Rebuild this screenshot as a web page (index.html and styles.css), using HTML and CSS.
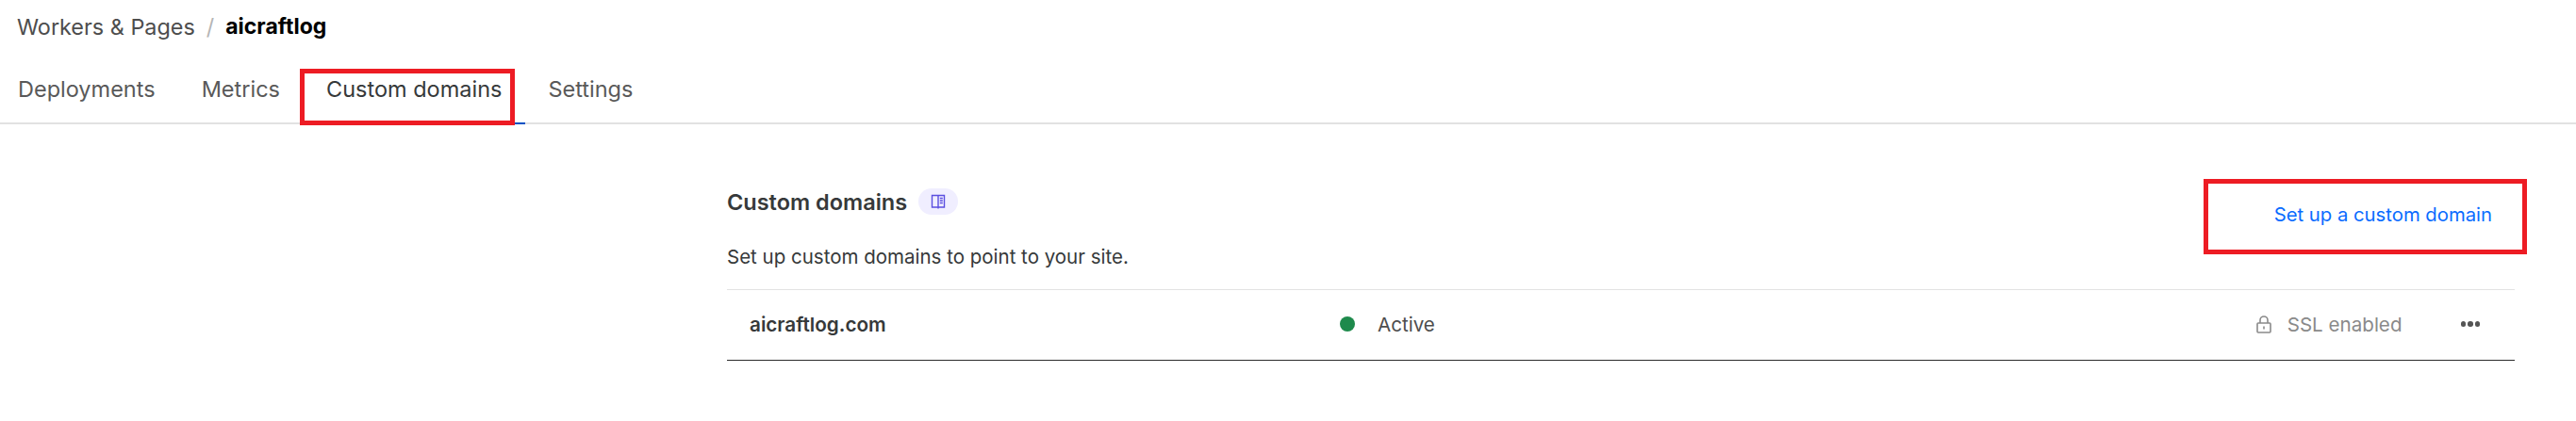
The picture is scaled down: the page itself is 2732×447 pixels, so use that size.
FILE: index.html
```html
<!DOCTYPE html>
<html>
<head>
  <meta charset="UTF-8">
  <title>aicraftlog - Custom domains</title>
  <link rel="stylesheet" href="styles.css">
</head>
<body>
  <header class="top">
    <div class="crumbs">
      <a href="#" class="crumb-link">Workers &amp; Pages</a>
      <span class="crumb-sep">/</span>
      <span class="crumb-current">aicraftlog</span>
    </div>
    <nav class="tabs">
      <a href="#" class="tab">Deployments</a>
      <a href="#" class="tab">Metrics</a>
      <a href="#" class="tab active">Custom domains</a>
      <a href="#" class="tab">Settings</a>
    </nav>
  </header>
  <main class="content">
    <div class="section-head">
      <div class="section-text">
        <div class="title-row">
          <h2>Custom domains</h2>
          <span class="doc-badge">
            <svg width="20" height="20" viewBox="0 0 20 20" fill="none" stroke="#5b4fe0" stroke-width="1.4">
              <path d="M10 3.5H3.5v12.5H10zM10 3.5h6.5v12.5H10zM10 16v1.5"/>
              <path d="M11.8 6.5h3M11.8 9h3M11.8 11.5h3"/>
            </svg>
          </span>
        </div>
        <p>Set up custom domains to point to your site.</p>
      </div>
      <a href="#" class="setup-link">Set up a custom domain</a>
    </div>
    <div class="domain-row">
      <span class="domain-name">aicraftlog.com</span>
      <span class="domain-status"><i class="dot"></i>Active</span>
      <span class="domain-ssl">
        <svg width="16" height="19" viewBox="0 0 16 19" fill="none" stroke="#8a8a8a" stroke-width="1.6">
          <path d="M4 8V5a4 4 0 0 1 8 0v3"/>
          <rect x="1" y="8" width="14" height="10" rx="1"/>
          <path d="M8 11.5v3"/>
        </svg>
        SSL enabled
      </span>
      <span class="more"><i></i><i></i><i></i></span>
    </div>
  </main>
  <div class="mark mark-tab"></div>
  <div class="mark mark-link"></div>
</body>
</html>
```

FILE: styles.css
```css
body {
  margin: 0;
  font-family: Inter, "Noto Sans", sans-serif;
  background-color: #FFFFFF;
  color: #36393a;
}

a {
  text-decoration: none;
  color: inherit;
}

.top {
  border-bottom: 2px solid #e2e2e2;
  height: 130px;
}

.crumbs {
  display: flex;
  align-items: center;
  gap: 12px;
  padding: 14px 0 0 18px;
  height: 28px;
  font-size: 23.4px;
}

.crumb-link {
  color: #4d4d4d;
}

.crumb-sep {
  color: #b5b5b5;
}

.crumb-current {
  color: #000000;
  font-weight: 700;
  font-size: 23px;
}

.tabs {
  display: flex;
  margin-top: 38px;
  padding-left: 19px;
}

.tab {
  padding: 0 24.5px;
  font-size: 23.5px;
  line-height: 30px;
  color: #595959;
  height: 50px;
}

.tab:first-child {
  padding-left: 0;
}

.tab.active {
  color: #36393a;
  border-bottom: 2px solid #0051c3;
}

.content {
  margin: 0 65px 0 771px;
  padding-top: 66px;
}

.section-head {
  display: flex;
  justify-content: space-between;
  align-items: flex-start;
  border-bottom: 1px solid #e2e2e2;
  height: 109px;
}

.title-row {
  display: flex;
  align-items: center;
  gap: 12px;
  height: 32px;
}

h2 {
  margin: 0;
  font-size: 23.5px;
  font-weight: 600;
}

.doc-badge {
  display: flex;
  align-items: center;
  justify-content: center;
  width: 42px;
  height: 28px;
  border-radius: 14px;
  background-color: #f0eeff;
}

.section-text p {
  margin: 29px 0 0 0;
  font-size: 20.5px;
  line-height: 28px;
}

.setup-link {
  color: #0a6cff;
  font-size: 20.3px;
  line-height: 28px;
  margin: 16px 24px 0 0;
}

.domain-row {
  display: flex;
  align-items: center;
  height: 72px;
  padding-bottom: 2px;
  border-bottom: 1px solid #2b2b2b;
  box-shadow: 0 1px 0 #777777;
  padding-left: 24px;
  font-size: 20.6px;
}

.domain-name {
  width: 626px;
  font-size: 20.7px;
  font-weight: 600;
}

.domain-status {
  display: flex;
  align-items: center;
  gap: 24px;
  flex: 1;
  color: #4d4d4d;
}

.dot {
  width: 16px;
  height: 16px;
  border-radius: 50%;
  background-color: #1e8a4c;
}

.domain-ssl {
  display: flex;
  align-items: center;
  gap: 17px;
  color: #8a8a8a;
}

.more {
  display: flex;
  gap: 2px;
  margin: 0 37px 0 62px;
}

.more i {
  width: 5.5px;
  height: 5.5px;
  border-radius: 50%;
  background-color: #555555;
}

.mark {
  position: absolute;
  border: 5px solid #ed1c24;
  box-sizing: border-box;
}

.mark-tab {
  left: 318px;
  top: 73px;
  width: 228px;
  height: 60px;
}

.mark-link {
  left: 2337px;
  top: 190px;
  width: 343px;
  height: 80px;
}
```
